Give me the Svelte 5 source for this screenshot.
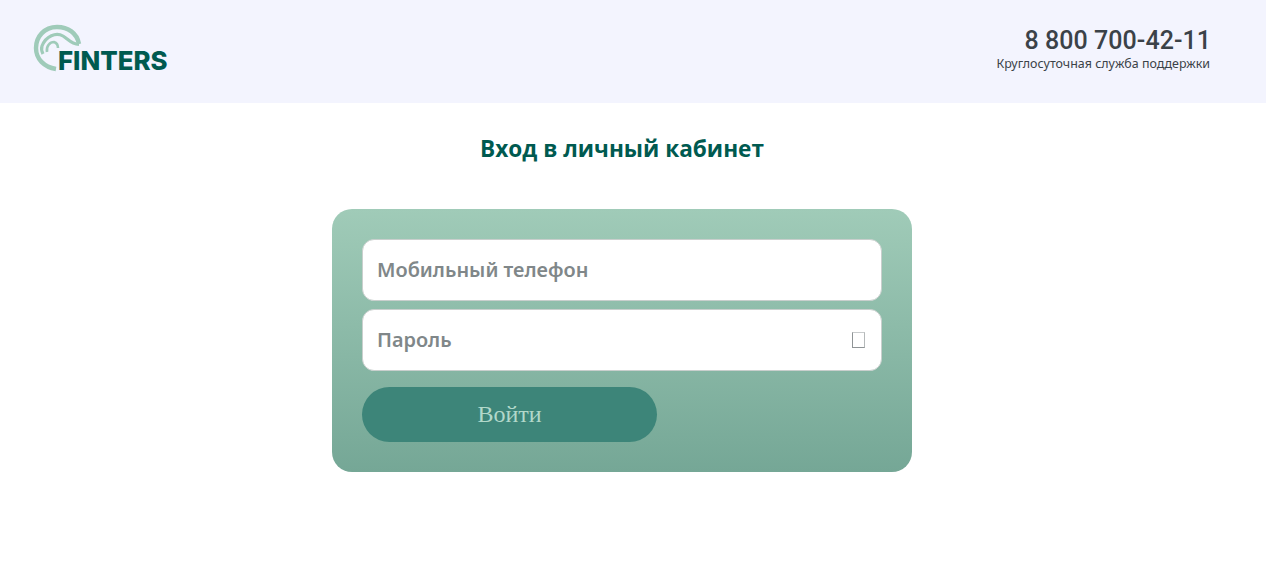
<script>
  let phone = $state("");
  let password = $state("");
</script>

<header class="top">
  <div class="logo">
    <svg class="mark" viewBox="0 0 50 50" width="50" height="50" fill="none" aria-hidden="true">
      <path d="M46 20 C44 9 35 3 24 3 C11 3 3 13 3 24 C3 35 11 43 23 45" stroke="#9fcbb9" stroke-width="4.4" />
      <path d="M46 20.5 C38 20 35 15 30 12 C23 8 13 12 9 22 C8 25 9 28 10 30" stroke="#9fcbb9" stroke-width="3.2" />
      <path d="M14 28 C13 22 17 18 21 18 C24 19 25 21 25 24" stroke="#9fcbb9" stroke-width="2.6" />
    </svg>
    <span class="logo-text">FINTERS</span>
  </div>
  <div class="contact">
    <div class="phone">8 800 700-42-11</div>
    <div class="hint">Круглосуточная служба поддержки</div>
  </div>
</header>

<main class="page">
  <h1>Вход в личный кабинет</h1>
  <form class="card" onsubmit={(e) => e.preventDefault()}>
    <div class="field">
      <input placeholder="Мобильный телефон" bind:value={phone} />
    </div>
    <div class="field">
      <input type="password" placeholder="Пароль" bind:value={password} />
      <span class="eye"></span>
    </div>
    <button type="submit">Войти</button>
  </form>
</main>

<style>
  :global(body) {
    background: #fff;
    font-family: "Noto Sans", sans-serif;
  }

  .top {
    display: flex;
    justify-content: space-between;
    align-items: center;
    height: 103px;
    padding: 0 56px 0 34px;
    background: #f3f4fe;
  }

  .logo {
    position: relative;
    width: 134px;
    height: 48px;
    margin-top: -5px;
  }

  .mark {
    position: absolute;
    left: -1px;
    top: -1px;
  }

  .logo-text {
    position: absolute;
    left: 24px;
    top: 21px;
    color: #005a50;
    font-family: Inter, sans-serif;
    font-size: 25.8px;
    font-weight: 800;
    line-height: 30px;
  }

  .contact {
    text-align: right;
    margin-top: -5px;
  }

  .phone {
    color: #3b4248;
    font-family: Roboto, sans-serif;
    font-size: 25px;
    font-weight: 500;
    line-height: 30px;
    letter-spacing: 0.05px;
    margin-right: -1px;
  }

  .hint {
    color: #3b4248;
    font-size: 12.45px;
    line-height: 16px;
  }

  .page {
    display: flex;
    flex-direction: column;
    align-items: center;
    width: 1244px;
    padding-top: 31px;
  }

  h1 {
    margin: 0 0 45px;
    color: #005a50;
    font-family: "Open Sans", sans-serif;
    font-size: 22.6px;
    font-weight: 700;
    line-height: 30px;
  }

  .card {
    display: flex;
    flex-direction: column;
    gap: 8px;
    box-sizing: border-box;
    width: 580px;
    height: 263px;
    padding: 30px;
    border-radius: 20px;
    background: linear-gradient(180deg, #a0cbb8, #75a796);
  }

  .field {
    position: relative;
  }

  input {
    display: block;
    box-sizing: border-box;
    width: 100%;
    height: 62px;
    padding: 0 14px 2px;
    border: 1px solid #c9cfcd;
    border-radius: 12px;
    background: #fff;
    color: #333;
    font-family: "Noto Sans", sans-serif;
    font-size: 19.9px;
    font-weight: 600;
    outline: none;
  }

  input::placeholder {
    color: #808789;
    opacity: 1;
  }

  .eye {
    position: absolute;
    right: 17px;
    top: 23px;
    box-sizing: border-box;
    width: 13px;
    height: 16px;
    border: 1px solid #8f9496;
    border-top-color: #c8cbcc;
    border-right-color: #b5b9ba;
  }

  button {
    width: 295px;
    height: 55px;
    margin-top: 8px;
    border: none;
    border-radius: 28px;
    background: #3d8579;
    color: #b2d8ca;
    font-family: "Liberation Serif", serif;
    font-size: 24px;
    cursor: pointer;
  }
</style>
